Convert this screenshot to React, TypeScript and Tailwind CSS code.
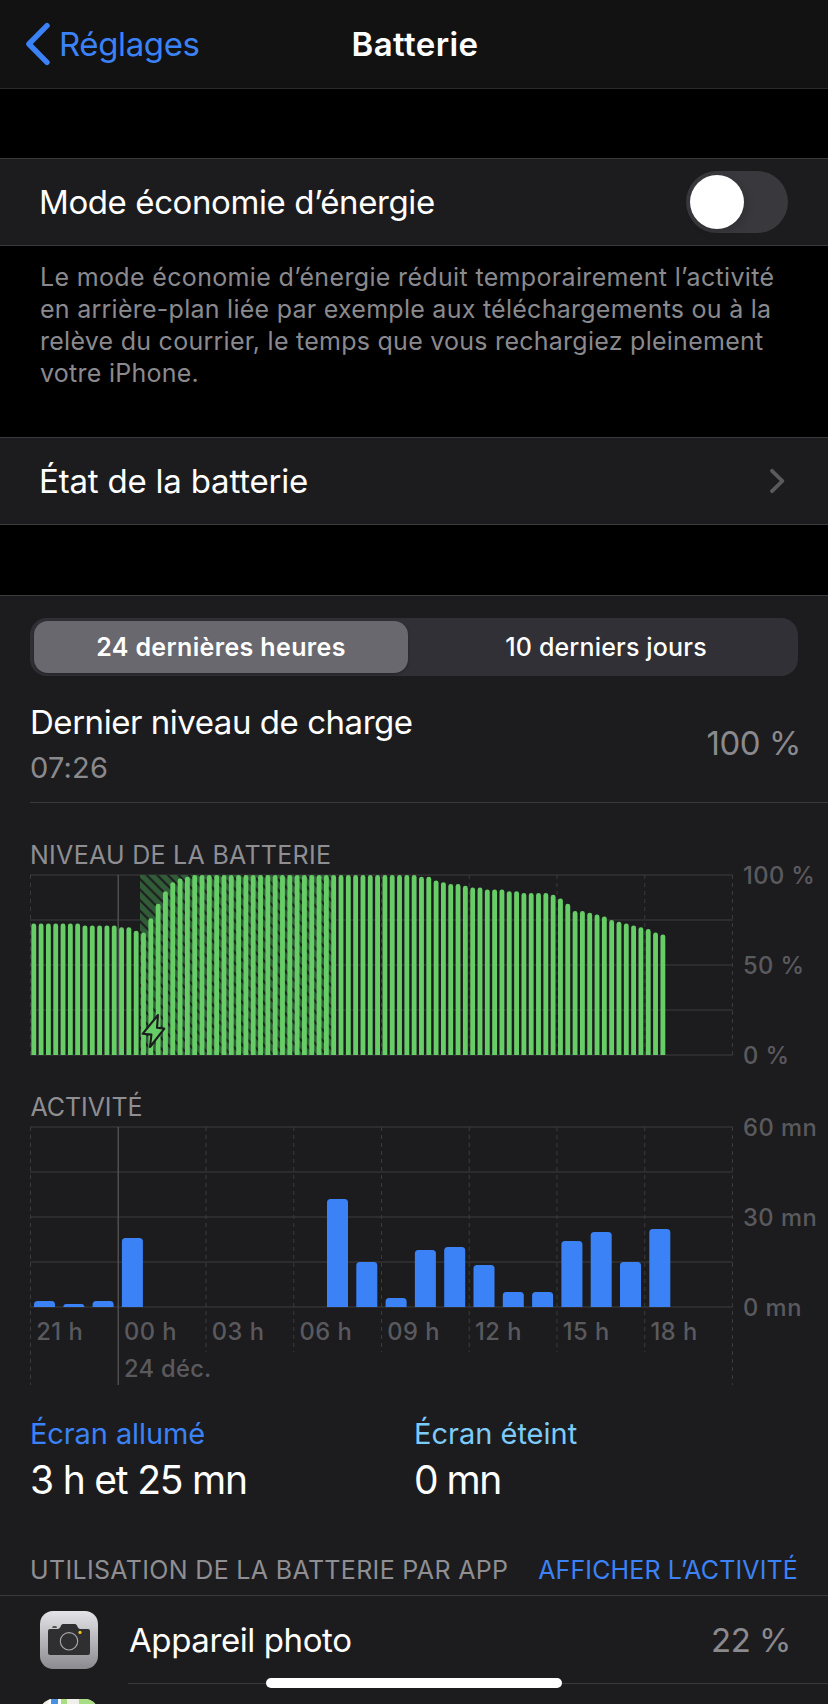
const LEVELS = [
  73, 73, 73, 73, 73, 73, 73, 72, 72, 72, 72, 72, 71, 71, 69, 68, 76, 84, 91, 96, 98, 99,
  ...Array<number>(31).fill(100),
  99, 99, 97, 96, 95, 95, 94, 93, 93, 92, 92, 92, 91, 91, 90, 90, 90, 90, 89, 87, 84, 80, 80, 79,
  78, 77, 75, 74, 73, 72, 71, 70, 68, 67,
];

const MINUTES = [2, 1, 2, 23, 0, 0, 0, 0, 0, 0, 36, 15, 3, 19, 20, 14, 5, 5, 22, 25, 15, 26];

const HOURS = ["21 h", "00 h", "03 h", "06 h", "09 h", "12 h", "15 h", "18 h"];

const LEFT = 30.5;
const STEP = 87.75;

function column(x: number, base: number, width: number, height: number, radius: number) {
  const r = Math.min(radius, height);
  const top = base - height;
  return `M${x} ${base}V${top + r}Q${x} ${top} ${x + r} ${top}H${x + width - r}Q${x + width} ${top} ${x + width} ${top + r}V${base}Z`;
}

function HorizontalLines({ top }: { top: number }) {
  return (
    <g fill="#2c2c2e">
      {[0, 1, 2, 3, 4].map((i) => (
        <rect key={i} x="30" y={top - 1 + i * 45} width="703" height="2" />
      ))}
    </g>
  );
}

function LevelChart() {
  return (
    <svg className="block shrink-0 overflow-visible font-['Inter',sans-serif]" width="828" height="200" viewBox="0 0 828 200">
      <defs>
        <pattern id="hatch" width="10.6" height="10.6" x="140" y="9" patternUnits="userSpaceOnUse">
          <rect width="10.6" height="10.6" fill="#315c38" />
          <path d="M-2 -2L12.6 12.6M-2 8.6L2 12.6M8.6 -2L12.6 2" stroke="#1c1c1e" strokeWidth="2.1" />
        </pattern>
      </defs>
      <HorizontalLines top={5} />
      {Array.from({ length: 9 }, (_, i) => (
        <line
          key={i}
          x1={LEFT + i * STEP}
          x2={LEFT + i * STEP}
          y1="5"
          y2="185"
          stroke={i === 1 ? "#515153" : "#3a3a3c"}
          strokeWidth={i === 1 ? 1.4 : 1}
          strokeDasharray={i === 1 ? undefined : "4 4"}
        />
      ))}
      <rect x="140" y="5" width="195" height="180" fill="url(#hatch)" />
      <g fill="#67ce67">
        {LEVELS.map((level, i) => (
          <path key={i} d={column(31.35 + i * 7.315, 185, 4.85, level * 1.8, 2.4)} />
        ))}
      </g>
      <path
        d="M158 145L157 157.8L164.3 158.6L150 177L151.4 164.6L142.6 163.8Z"
        fill="#67ce67"
        stroke="#1c1c1e"
        strokeWidth="2.1"
        strokeLinejoin="round"
      />
      <g fill="#5a5a5e" fontSize="23.7" fontWeight="500" letterSpacing="0.4">
        <text x="743" y="14">100 %</text>
        <text x="743" y="104">50 %</text>
        <text x="743" y="194">0 %</text>
      </g>
    </svg>
  );
}

function ActivityChart() {
  return (
    <svg className="block shrink-0 overflow-visible font-['Inter',sans-serif]" width="828" height="268" viewBox="0 0 828 268">
      <HorizontalLines top={5} />
      {Array.from({ length: 9 }, (_, i) => (
        <line
          key={i}
          x1={LEFT + i * STEP}
          x2={LEFT + i * STEP}
          y1="5"
          y2={i < 2 || i === 8 ? 263 : 230}
          stroke={i === 1 ? "#515153" : "#3a3a3c"}
          strokeWidth={i === 1 ? 1.4 : 1}
          strokeDasharray={i === 1 ? undefined : "4 4"}
        />
      ))}
      <g fill="#3b82f7">
        {MINUTES.map((m, i) => m > 0 && <path key={i} d={column(34 + i * 29.3, 185, 21, m * 3, 3.5)} />)}
      </g>
      <g fill="#5a5a5e" fontSize="23.7" fontWeight="500" letterSpacing="0.5">
        {HOURS.map((h, i) => (
          <text key={h} x={36.2 + i * STEP} y="218">{h}</text>
        ))}
        <text x="124" y="255" letterSpacing="0.3">24 déc.</text>
        <text x="743" y="14">60 mn</text>
        <text x="743" y="104">30 mn</text>
        <text x="743" y="194">0 mn</text>
      </g>
    </svg>
  );
}

function CameraIcon() {
  return (
    <svg width="58" height="58" viewBox="0 0 58 58">
      <defs>
        <linearGradient id="silver" x1="0" y1="0" x2="0" y2="1">
          <stop offset="0" stopColor="#e4e3e8" />
          <stop offset="1" stopColor="#8b8a8f" />
        </linearGradient>
      </defs>
      <rect width="58" height="58" rx="13" fill="url(#silver)" />
      <path d="M13 15.2h3.2q.7 0 .7 1.6h-4.6q0-1.6.7-1.6Z" fill="#2f2f31" />
      <path
        d="M10 18H17.5C19.6 18 20 16.6 20.8 15C21.5 13.5 22.2 13 23.8 13H34.2C35.8 13 36.5 13.5 37.2 15C38 16.6 38.4 18 40.5 18H48Q50 18 50 20V42Q50 44 48 44H10Q8 44 8 42V20Q8 18 10 18Z"
        fill="#2f2f31"
      />
      <circle cx="29" cy="30.3" r="8.7" fill="none" stroke="#a9a9ad" strokeWidth="1.1" />
      <circle cx="40" cy="21.4" r="1.6" fill="#f8c622" />
    </svg>
  );
}

function MapIcon() {
  return (
    <svg width="58" height="58" viewBox="0 0 58 58">
      <defs>
        <clipPath id="tile">
          <rect width="58" height="58" rx="13" />
        </clipPath>
      </defs>
      <g clipPath="url(#tile)">
        <rect width="58" height="58" fill="#f1efe9" />
        <rect x="11" width="7" height="58" fill="#4a90e2" />
        <rect x="8.5" width="2.5" height="58" fill="#ffffff" />
        <rect x="18" width="3" height="58" fill="#ffffff" />
        <rect x="21" width="6" height="58" fill="#a9dd84" />
        <rect x="39" width="19" height="58" fill="#a9dd84" />
      </g>
    </svg>
  );
}

export default function App() {
  return (
    <div className="relative flex h-[1704px] w-[828px] flex-col overflow-hidden bg-black font-['Inter',sans-serif] whitespace-nowrap text-white">
      <header className="grid h-[89px] shrink-0 grid-cols-3 items-center border-b border-[#2a2a2b] bg-[#121212]">
        <div className="flex items-center gap-[7px] pl-[25px] text-[33px] tracking-[-0.38px] text-[#3b82f7]">
          <svg width="27" height="44" viewBox="0 0 27 44" fill="none" stroke="currentColor" strokeWidth="5.4" strokeLinecap="round" strokeLinejoin="round">
            <path d="M22 3.7L3.9 22L22 40.3" />
          </svg>
          <span className="pt-px">Réglages</span>
        </div>
        <h1 className="pt-px pl-[2px] text-center text-[33px] font-semibold tracking-[0.4px]">Batterie</h1>
      </header>

      <section className="mt-[69px] flex h-[88px] shrink-0 items-center justify-between border-y border-[#3a3a3c] bg-[#1c1c1e] pr-10 pl-[39px]">
        <span className="pt-px text-[33px] tracking-[-0.4px]">Mode économie d’énergie</span>
        <button className="flex h-[62px] w-[102px] items-center rounded-full bg-[#39383d] pl-1">
          <span className="h-[54px] w-[54px] rounded-full bg-white shadow-[3px_3px_8px_rgba(0,0,0,0.15)]" />
        </button>
      </section>

      <p className="mt-[15px] shrink-0 pl-10 text-[25px] leading-[32px] tracking-[0.26px] text-[#8a8a8e]">
        <span className="tracking-[0.34px]">Le mode économie d’énergie réduit temporairement l’activité</span>
        <br />
        en arrière-plan liée par exemple aux téléchargements ou à la
        <br />
        relève du courrier, le temps que vous rechargiez pleinement
        <br />
        votre iPhone.
      </p>

      <section className="mt-12 flex h-[88px] shrink-0 items-center justify-between border-y border-[#3a3a3c] bg-[#1c1c1e] pr-[42px] pl-[39px]">
        <span className="pt-px text-[33px] tracking-[-0.2px]">État de la batterie</span>
        <svg width="18" height="28" viewBox="0 0 18 28" fill="none" stroke="#5a5a5e" strokeWidth="3.8" strokeLinecap="round" strokeLinejoin="round">
          <path d="M4 3.8L14.4 14L4 24.2" />
        </svg>
      </section>

      <main className="mt-[70px] flex h-[1109px] shrink-0 flex-col border-t border-[#3a3a3c] bg-[#1c1c1e]">
        <div className="mx-[30px] mt-[22px] grid h-[58px] shrink-0 grid-cols-[374px_1fr] rounded-[17px] bg-[#313036] pt-[3px] pr-[3px] pb-[3px] pl-1 text-[25px]">
          <div className="flex items-center justify-center rounded-[14px] bg-[#69686e] pt-px font-semibold tracking-[0.36px] shadow-[0_1px_3px_rgba(0,0,0,0.3)]">
            24 dernières heures
          </div>
          <div className="flex items-center justify-center pt-px pl-[9px] font-medium tracking-[0.17px]">10 derniers jours</div>
        </div>

        <div className="mt-2 ml-[30px] flex h-[119px] shrink-0 items-center justify-between border-b border-[#3a3a3c] pr-[27px]">
          <div className="flex flex-col gap-[6px] pt-[3px]">
            <div className="h-10 text-[33px] leading-[40px] tracking-[-0.46px]">Dernier niveau de charge</div>
            <div className="h-10 text-[29px] leading-[40px] tracking-[0.2px] text-[#8a8a8e]">07:26</div>
          </div>
          <span className="pt-px text-[33px] tracking-[-0.46px] text-[#8a8a8e]">100 %</span>
        </div>

        <h2 className="mt-[37px] h-[30px] shrink-0 pl-[30px] text-[25px] leading-[30px] tracking-[0.28px] text-[#8e8e93]">NIVEAU DE LA BATTERIE</h2>
        <LevelChart />

        <h2 className="mt-[22px] h-[30px] shrink-0 pl-[30.5px] text-[25px] leading-[30px] tracking-[-0.08px] text-[#8e8e93]">ACTIVITÉ</h2>
        <ActivityChart />

        <div className="mt-[26px] grid shrink-0 grid-cols-[384px_1fr] pl-[30px]">
          <div>
            <div className="text-[29px] leading-[36px] tracking-[-0.1px] text-[#3b82f7]">Écran allumé</div>
            <div className="mt-[5px] text-[39px] leading-[46px] tracking-[-1.2px]">3 h et 25 mn</div>
          </div>
          <div>
            <div className="text-[29px] leading-[36px] text-[#7ccbf8]">Écran éteint</div>
            <div className="mt-[5px] text-[39px] leading-[46px] tracking-[-1.5px]">0 mn</div>
          </div>
        </div>

        <div className="mt-[52px] flex h-10 shrink-0 justify-between pr-[30px] pl-[30px] text-[25px] leading-[30px]">
          <h2 className="tracking-[0.33px] text-[#8e8e93]">UTILISATION DE LA BATTERIE PAR APP</h2>
          <span className="tracking-[0.13px] text-[#3b82f7]">AFFICHER L’ACTIVITÉ</span>
        </div>

        <div className="flex h-[89px] shrink-0 border-t border-[#3a3a3c] pl-10">
          <div className="flex w-[88px] shrink-0 items-center">
            <CameraIcon />
          </div>
          <div className="flex flex-1 items-center justify-between border-b border-[#3a3a3c] pt-[3px] pr-[37px] text-[33px]">
            <span className="pl-px tracking-[-0.4px]">Appareil photo</span>
            <span className="tracking-[-0.5px] text-[#8a8a8e]">22 %</span>
          </div>
        </div>
        <div className="shrink-0 pt-[15px] pl-10">
          <MapIcon />
        </div>
      </main>

      <div className="absolute bottom-4 left-[266px] h-[10px] w-[296px] rounded-full bg-white" />
    </div>
  );
}
